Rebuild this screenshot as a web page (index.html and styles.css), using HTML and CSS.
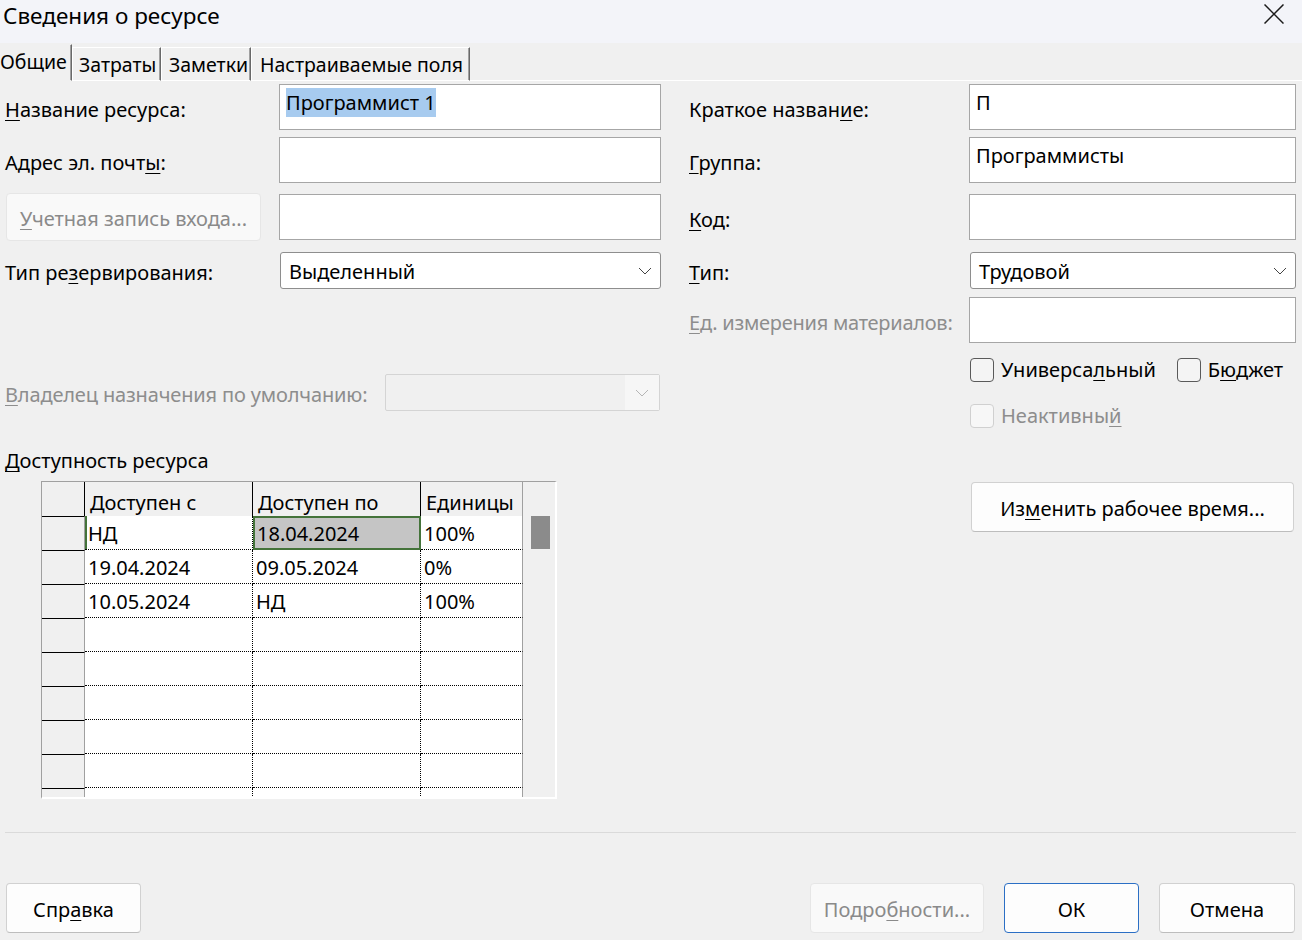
FILE: index.html
```html
<!DOCTYPE html>
<html lang="ru">
<head>
<meta charset="utf-8">
<title>Сведения о ресурсе</title>
<link rel="stylesheet" href="styles.css">
</head>
<body>
<div class="dialog">
  <header class="titlebar">
    <span class="title">Сведения о ресурсе</span>
    <button class="close" aria-label="Закрыть"><svg width="20" height="20" viewBox="0 0 20 20"><path d="M0.5 0.5L19.5 19.5M19.5 0.5L0.5 19.5" stroke="#1b1b1b" stroke-width="1.5" fill="none"/></svg></button>
  </header>

  <nav class="tabs">
    <div class="tab active t1">Общие</div>
    <div class="tab t2">Затраты</div>
    <div class="tab t3">Заметки</div>
    <div class="tab t4">Настраиваемые поля</div>
    <div class="tabs-fill"></div>
  </nav>

  <main class="panel">
    <section class="col left">
      <div class="row r1">
        <label class="lbl"><u>Н</u>азвание ресурса:</label>
        <div class="edit"><span class="selected">Программист 1</span></div>
      </div>
      <div class="row r2">
        <label class="lbl">Адрес эл. почт<u>ы</u>:</label>
        <div class="edit"></div>
      </div>
      <div class="row r3">
        <div class="lbl lbl-btn"><button class="btn btn-account" disabled><u>У</u>четная запись входа...</button></div>
        <div class="edit"></div>
      </div>
      <div class="row r4">
        <label class="lbl">Тип ре<u>з</u>ервирования:</label>
        <div class="combo"><span class="combo-text">Выделенный</span><svg class="chev" width="14" height="8" viewBox="0 0 14 8"><path d="M1 1l6 6 6-6" stroke="#444" stroke-width="1" fill="none"/></svg></div>
      </div>
      <div class="row r-owner">
        <label class="lbl lbl-owner disabled"><u>В</u>ладелец назначения по умолчанию:</label>
        <div class="combo combo-disabled"><span></span><div class="chev-box"><svg class="chev" width="14" height="8" viewBox="0 0 14 8"><path d="M1 1l6 6 6-6" stroke="#b5b5b5" stroke-width="1" fill="none"/></svg></div></div>
      </div>
      <div class="avail-title"><u>Д</u>оступность ресурса</div>
      <div class="grid">
        <div class="grid-body">
          <div class="hc corner"></div>
          <div class="hc">Доступен с</div>
          <div class="hc">Доступен по</div>
          <div class="hc last">Единицы</div>

          <div class="rh"></div>
          <div class="dc c1 focus-row">НД</div>
          <div class="dc c2 active">18.04.2024</div>
          <div class="dc c3">100%</div>

          <div class="rh"></div>
          <div class="dc c1">19.04.2024</div>
          <div class="dc c2">09.05.2024</div>
          <div class="dc c3">0%</div>

          <div class="rh"></div>
          <div class="dc c1">10.05.2024</div>
          <div class="dc c2">НД</div>
          <div class="dc c3">100%</div>

          <div class="rh"></div><div class="dc c1"></div><div class="dc c2"></div><div class="dc c3"></div>
          <div class="rh"></div><div class="dc c1"></div><div class="dc c2"></div><div class="dc c3"></div>
          <div class="rh"></div><div class="dc c1"></div><div class="dc c2"></div><div class="dc c3"></div>
          <div class="rh"></div><div class="dc c1"></div><div class="dc c2"></div><div class="dc c3"></div>
          <div class="rh"></div><div class="dc c1"></div><div class="dc c2"></div><div class="dc c3"></div>
          <div class="rh"></div><div class="dc c1"></div><div class="dc c2"></div><div class="dc c3"></div>
        </div>
        <div class="scroll"><div class="thumb"></div></div>
      </div>
    </section>

    <section class="col right">
      <div class="row r1">
        <label class="lbl">Краткое назван<u>и</u>е:</label>
        <div class="edit">П</div>
      </div>
      <div class="row r2">
        <label class="lbl"><u>Г</u>руппа:</label>
        <div class="edit">Программисты</div>
      </div>
      <div class="row r3b">
        <label class="lbl"><u>К</u>од:</label>
        <div class="edit"></div>
      </div>
      <div class="row r4b">
        <label class="lbl"><u>Т</u>ип:</label>
        <div class="combo"><span class="combo-text">Трудовой</span><svg class="chev" width="14" height="8" viewBox="0 0 14 8"><path d="M1 1l6 6 6-6" stroke="#444" stroke-width="1" fill="none"/></svg></div>
      </div>
      <div class="row r5">
        <label class="lbl lbl-units disabled"><u>Е</u>д. измерения материалов:</label>
        <div class="edit"></div>
      </div>
      <div class="checks">
        <label class="check"><span class="box"></span>Универса<u>л</u>ьный</label>
        <label class="check check-budget"><span class="box"></span>Б<u>ю</u>джет</label>
      </div>
      <div class="checks checks-inactive">
        <label class="check disabled"><span class="box box-disabled"></span>Неактивны<u>й</u></label>
      </div>
      <button class="btn btn-worktime">Из<u>м</u>енить рабочее время...</button>
    </section>
  </main>

  <div class="divider"></div>

  <footer class="footer">
    <button class="btn btn-foot btn-help">Спр<u>а</u>вка</button>
    <div class="footer-right">
      <button class="btn btn-foot btn-details" disabled>Подро<u>б</u>ности...</button>
      <button class="btn btn-foot btn-ok">ОК</button>
      <button class="btn btn-foot btn-cancel">Отмена</button>
    </div>
  </footer>
</div>
</body>
</html>
```

FILE: styles.css
```css
* { box-sizing: border-box; }
html, body { margin: 0; padding: 0; }
body {
  width: 1302px;
  height: 940px;
  overflow: hidden;
  background: #f0f0f0;
  font-family: "Noto Sans", "Segoe UI", sans-serif;
  font-size: 20px;
  color: #000;
}
u { text-decoration-thickness: 1px; text-underline-offset: 3px; }

.dialog { display: flex; flex-direction: column; height: 940px; }

/* title bar */
.titlebar {
  height: 43px;
  background: #f3f4f9;
  display: flex;
  justify-content: space-between;
  align-items: flex-start;
}
.title { font-size: 22.5px; line-height: 30px; padding: 1px 0 0 3px; }
.close { width: 20px; height: 20px; margin: 4px 18px 0 0; padding: 0; border: 0; background: none; }
.close svg { display: block; }

/* tabs */
.tabs { display: flex; align-items: flex-end; height: 38px; font-size: 19.5px; }
.tab {
  height: 34px;
  padding-left: 6px;
  padding-top: 1px;
  line-height: 31px;
  white-space: nowrap;
  border-top: 1px solid #fff;
  border-left: 1px solid #fff;
  border-right: 1px solid #696969;
  border-bottom: 1px solid #fff;
  box-shadow: inset -1px 0 #a0a0a0;
}
.tab.active {
  height: 37px;
  padding-left: 0;
  padding-top: 0;
  line-height: 34px;
  border-left: 0;
  border-top-color: transparent;
  border-bottom-color: transparent;
}
.t1 { width: 72px; font-size: 19.5px; }
.t2 { width: 89px; }
.t3 { width: 90px; padding-left: 7px; }
.t4 { width: 219px; padding-left: 8px; }
.tabs-fill { flex: 1; border-bottom: 1px solid #fff; }

/* panel */
.panel { display: flex; padding: 3px 6px 0 5px; }
.col { display: flex; flex-direction: column; }
.col.left { width: 656px; }
.col.right { width: 607px; margin-left: 28px; }

.row { display: flex; align-items: center; }
.lbl { white-space: nowrap; padding-top: 4px; }
.lbl-btn { padding-top: 0; }
.left .lbl { width: 274px; flex: none; }
.right .lbl { width: 280px; flex: none; }
.right .lbl-units { letter-spacing: -0.25px; }
.disabled { color: #8d8d8d; }

.edit {
  height: 46px;
  background: #fff;
  border: 1px solid #a6a6a6;
  padding: 3px 6px;
  line-height: 29px;
}
.left .edit { width: 382px; }
.right .edit { width: 327px; }
.selected { display: inline-block; background: #a7cbef; line-height: 29px; }

.combo {
  height: 37px;
  margin-left: 1px;
  background: #fff;
  border: 1px solid #8e8e8e;
  border-radius: 3px;
  display: flex;
  align-items: center;
  justify-content: space-between;
  padding: 0 8px 0 8px;
}
.combo-text { padding-top: 2px; }
.left .combo { width: 381px; }
.right .combo { width: 326px; }
.chev { display: block; }
.combo-disabled {
  width: 275px !important;
  margin-left: 0;
  background: #f0f0f0;
  border-color: #d4d4d4;
  border-radius: 2px;
  padding: 0;
}
.chev-box { width: 34px; height: 100%; background: #f6f6f6; display: flex; align-items: center; justify-content: center; }

.r1 { height: 46px; }
.r2 { height: 46px; margin-top: 7px; }
.r3 { height: 48px; margin-top: 10px; }
.r4 { height: 37px; margin-top: 11px; }
.r-owner { height: 37px; margin-top: 85px; }
.left .lbl-owner { width: 380px; letter-spacing: -0.15px; }

.r3b { height: 46px; margin-top: 11px; }
.r4b { height: 37px; margin-top: 12px; }
.r5 { height: 46px; margin-top: 8px; }

/* buttons */
.btn {
  font-family: inherit;
  font-size: 20px;
  color: #000;
  background: #fdfdfd;
  border: 1px solid #d1d1d1;
  border-bottom-color: #bdbdbd;
  border-radius: 4px;
  padding: 2px 0 0;
  cursor: default;
}
.btn:disabled { color: #8a8a8a; background: #f9f9f9; border-color: #e6e6e6; }
.btn-account { width: 255px; height: 48px; margin-left: 1px; text-align: center; }

.btn-worktime { width: 323px; height: 50px; margin: 54px 0 0 282px; }

/* availability */
.avail-title { margin-top: 36px; line-height: 26px; height: 26px; padding-top: 1px; }
.grid {
  margin: 8px 0 0 36px;
  width: 516px;
  height: 318px;
  border-top: 1px solid #a0a0a0;
  border-left: 1px solid #a0a0a0;
  border-right: 2px solid #fff;
  border-bottom: 2px solid #fff;
  display: flex;
  overflow: hidden;
}
.grid-body {
  width: 481px;
  flex: none;
  display: grid;
  grid-template-columns: 43px 168px 168px 102px;
  grid-template-rows: 34px;
  grid-auto-rows: 34px;
  align-content: start;
  background: #fff;
}
.hc {
  background: #f0f0f0;
  border-right: 1px solid #000;
  padding: 6px 0 0 5px;
  line-height: 29px;
  white-space: nowrap;
}
.hc.last { border-right: 1px solid #a0a0a0; }
.rh {
  background: #f0f0f0;
  border-right: 1px solid #a0a0a0;
  border-top: 1px solid #000;
}
.dc {
  background: #fff;
  border-right: 1px dotted #000;
  border-bottom: 1px dotted #000;
  padding: 3px 0 0 3px;
  line-height: 30px;
  white-space: nowrap;
}
.dc.c3 { border-right: 1px solid #a0a0a0; }
.dc.active {
  background: #c5c5c5;
  border: 2px solid #44733a;
  padding: 1px 0 0 2px;
}
.dc.focus-row { box-shadow: inset 2px 0 #44733a; }
.scroll { flex: 1; background: #f0f0f0; padding: 34px 0 0 8px; }
.thumb { width: 19px; height: 33px; background: #8b8b8b; }

/* checkboxes */
.checks { display: flex; margin: 15px 0 0 281px; height: 24px; align-items: center; }
.checks-inactive { margin-top: 22px; }
.check { display: flex; align-items: center; white-space: nowrap; line-height: 24px; }
.check-budget { margin-left: 21px; }
.box {
  width: 24px;
  height: 24px;
  border: 1px solid #5a5a5a;
  border-radius: 4px;
  background: #f4f4f4;
  margin-right: 7px;
  flex: none;
}
.box-disabled { border-color: #d0d0d0; background: #f7f7f7; }

/* footer */
.divider { height: 1px; background: #dadada; margin: 33px 6px 0 5px; }
.footer { display: flex; justify-content: space-between; margin-top: 50px; padding: 0 7px 0 6px; }
.footer-right { display: flex; gap: 20px; }
.btn-foot { height: 50px; }
.btn-help { width: 135px; }
.btn-details { width: 174px; }
.btn-ok { width: 135px; border: 1px solid #2b6fc5; background: #fdfdfd; }
.btn-cancel { width: 136px; }
```
